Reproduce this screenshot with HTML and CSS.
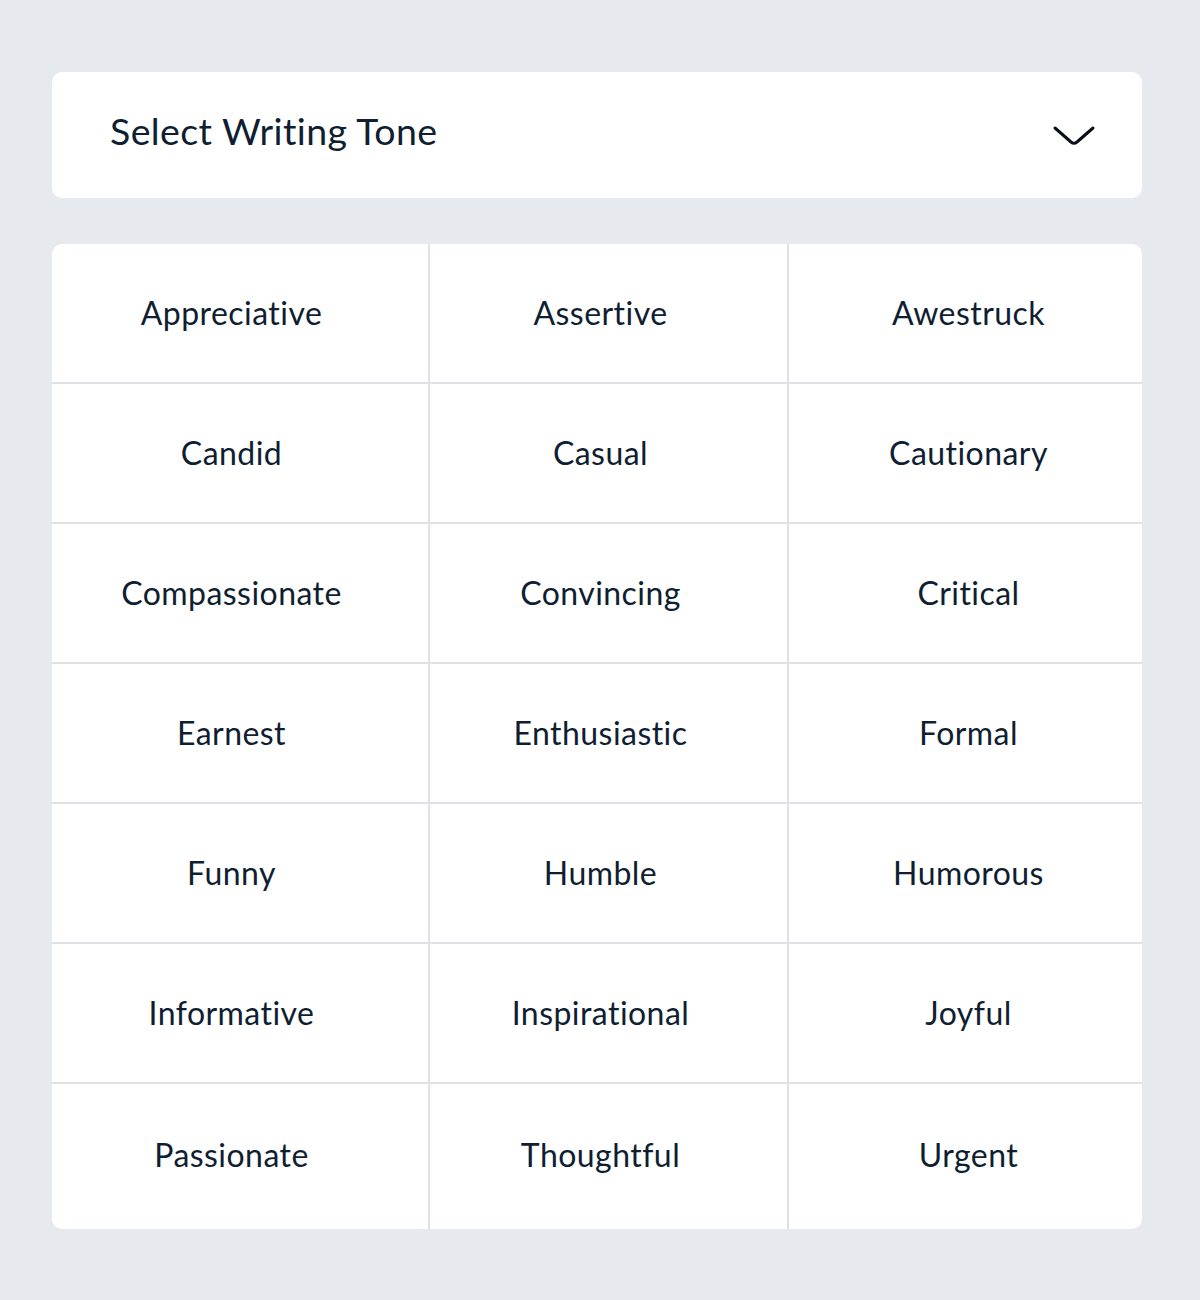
FILE: index.html
```html
<!DOCTYPE html>
<html lang="en">
<head>
    <meta charset="UTF-8">
    <meta name="viewport" content="width=device-width, initial-scale=1.0">
    <title>Select Writing Tone</title>
    <link rel="stylesheet" href="styles.css">
</head>
<body>
    <div class="wrapper">
        <!-- Dropdown header -->
        <div class="select-box">
            <span class="select-label">Select Writing Tone</span>
            <svg class="chevron" width="44" height="22" viewBox="0 0 44 22" fill="none">
                <path d="M3 3 L19 17 Q22 19.5 25 17 L41 3" stroke="#0b0f14" stroke-width="3" stroke-linecap="round" stroke-linejoin="round"/>
            </svg>
        </div>

        <!-- Tone options -->
        <div class="tone-grid">
            <div class="tone">Appreciative</div>
            <div class="tone">Assertive</div>
            <div class="tone">Awestruck</div>
            <div class="tone">Candid</div>
            <div class="tone">Casual</div>
            <div class="tone">Cautionary</div>
            <div class="tone">Compassionate</div>
            <div class="tone">Convincing</div>
            <div class="tone">Critical</div>
            <div class="tone">Earnest</div>
            <div class="tone">Enthusiastic</div>
            <div class="tone">Formal</div>
            <div class="tone">Funny</div>
            <div class="tone">Humble</div>
            <div class="tone">Humorous</div>
            <div class="tone">Informative</div>
            <div class="tone">Inspirational</div>
            <div class="tone">Joyful</div>
            <div class="tone">Passionate</div>
            <div class="tone">Thoughtful</div>
            <div class="tone">Urgent</div>
        </div>
    </div>
</body>
</html>
```

FILE: styles.css
```css
/* General styles */
* {
    margin: 0;
    padding: 0;
    box-sizing: border-box;
}

body {
    background: #e6e9ee;
    font-family: 'Lato', 'Open Sans', sans-serif;
    font-variant-ligatures: none;
    color: #0f1e31;
}

.wrapper {
    width: 1090px;
    margin: 72px 0 0 52px;
}

.select-box {
    background: #fff;
    height: 126px;
    border-radius: 10px;
    display: flex;
    align-items: center;
    justify-content: space-between;
    padding: 0 46px 0 58px;
}

.select-label {
    font-size: 37.5px;
    letter-spacing: 0.4px;
    margin-top: -9px;
}

.chevron {
    margin-top: 2px;
}

.tone-grid {
    margin-top: 46px;
    background: #fff;
    border-radius: 10px;
    display: grid;
    grid-template-columns: 378px 359px 1fr;
    overflow: hidden;
}

.tone {
    height: 140px;
    display: flex;
    align-items: center;
    justify-content: center;
    font-size: 32px;
    letter-spacing: 0.45px;
    border-bottom: 2px solid #e0e1e6;
    padding-bottom: 2px;
}

.tone:nth-child(3n+1) {
    border-right: 2px solid #e0e1e6;
    padding-right: 17px;
}

.tone:nth-child(3n+2) {
    border-right: 2px solid #e0e1e6;
    padding-right: 16px;
}

.tone:nth-child(3n) {
    padding-left: 6px;
}

.tone:nth-last-child(-n+3) {
    height: 145px;
    border-bottom: none;
    padding-bottom: 5px;
}
```
